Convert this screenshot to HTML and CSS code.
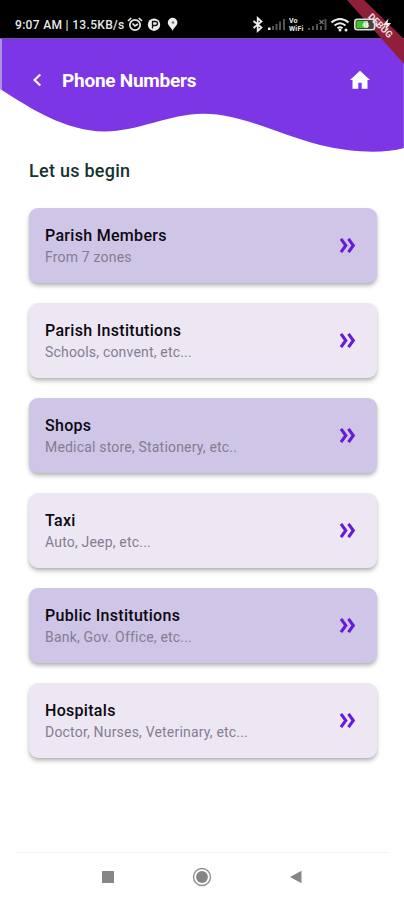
FILE: index.html
```html
<!DOCTYPE html>
<html lang="en">
<head>
<meta charset="utf-8">
<title>Phone Numbers</title>
<link rel="stylesheet" href="styles.css">
</head>
<body>
<div class="phone">
  <div class="status">
    <span class="time">9:07 AM | 13.5KB/s</span>
    <svg class="left-icons" width="54" height="18" viewBox="126 16 54 18">
      <g fill="none" stroke="#e8e8e8" stroke-width="1.7"><circle cx="135" cy="25" r="5.2"/><path d="M128 21l3.2-3M142 21l-3.2-3M132.500 23.500l2.500 2.500 3-2"/></g>
      <circle cx="154" cy="24.700" r="6.200" fill="#eee"/>
      <path d="M152.500 28.500v-7h3a2 2 0 0 1 0 4h-3" fill="none" stroke="#111" stroke-width="1.300"/>
      <path d="M172.600 31c-1-3-4.800-5-4.800-8.400a4.800 4.800 0 0 1 9.600 0c0 3.400-3.800 5.400-4.800 8.400z" fill="#eee"/>
      <circle cx="173" cy="22.500" r="1.300" fill="#777"/>
    </svg>
    <span class="spacer"></span>
    <svg class="right-icons" width="39" height="18" viewBox="250 16 39 18">
      <path d="M253.500 21l8 6.500-3.800 3.500v-13l3.800 3.500-8 6.500" fill="none" stroke="#eee" stroke-width="1.800"/>
      <path d="M268 30v-2.500h2.500V30z" fill="#eee"/>
      <g fill="#555"><path d="M272 30v-4h2v4zM275.500 30v-6h2v6zM279 30v-8.500h2V30zM283 30V19h2v11z"/></g>
    </svg>
    <span class="vowifi"><b>Vo</b><b>WiFi</b></span>
    <svg class="right-icons" width="92" height="18" viewBox="307 16 92 18">
      <g fill="#555"><path d="M308 30v-2h2v2zM312 30v-4h2v4zM316 30v-6h2v6zM320 30v-4h2v4zM324.500 30V19h2v11z"/></g>
      <path d="M319.500 20l4 4m0-4l-4 4" stroke="#777" stroke-width="1.200"/>
      <g fill="none" stroke="#eee" stroke-width="2"><path d="M331.500 22.500q8.500-7 17 0M334.500 25.500q5.500-4.500 11 0M337.500 28.300q2.500-2 5 0"/></g>
      <circle cx="340" cy="30" r="1.500" fill="#eee"/><circle cx="346" cy="30" r="1.500" fill="#eee"/>
    </svg>
  </div>
  <header class="header">
    <svg class="wave" width="404" height="116" viewBox="0 38 404 116">
      <path d="M0 38H404V148C382 154 352 152.500 320 145C275 133.500 241 113.500 203 113.800C169 114 137 131.800 104 131.500C65 131 30 108 0 89Z" fill="#7c36e6"/>
      <path d="M0 38H2V90.300L0 89z" fill="#ac94e3"/>
      <path d="M0 38.500H404" stroke="#74539f"/>
      <path d="M403.500 39V148" stroke="#9153eb"/>
    </svg>
    <div class="bar">
      <svg width="10" height="14" viewBox="0 0 10 14"><path d="M8.300 1.500L2.500 7l5.800 5.500" fill="none" stroke="#fff" stroke-width="2.100"/></svg>
      <h1>Phone Numbers</h1>
      <svg class="home" width="22" height="20" viewBox="0 0 22 20"><path d="M11 .8L21 10h-2.500v8.800h-5.800v-6H9.300v6H3.500V10H1z" fill="#fff"/></svg>
    </div>
  </header>
  <main class="content">
    <h2>Let us begin</h2>
    <div class="cards">
      <div class="card deep"><div><h3>Parish Members</h3><p>From 7 zones</p></div><svg class="more" width="18" height="17" viewBox="0 0 18 17"><path d="M2 1.800L6.800 8.500 2 15.200M9.500 1.800l4.800 6.700-4.800 6.700"/></svg></div>
      <div class="card"><div><h3>Parish Institutions</h3><p>Schools, convent, etc...</p></div><svg class="more" width="18" height="17" viewBox="0 0 18 17"><path d="M2 1.800L6.800 8.500 2 15.200M9.500 1.800l4.800 6.700-4.800 6.700"/></svg></div>
      <div class="card deep"><div><h3>Shops</h3><p>Medical store, Stationery, etc..</p></div><svg class="more" width="18" height="17" viewBox="0 0 18 17"><path d="M2 1.800L6.800 8.500 2 15.200M9.500 1.800l4.800 6.700-4.800 6.700"/></svg></div>
      <div class="card"><div><h3>Taxi</h3><p>Auto, Jeep, etc...</p></div><svg class="more" width="18" height="17" viewBox="0 0 18 17"><path d="M2 1.800L6.800 8.500 2 15.200M9.500 1.800l4.800 6.700-4.800 6.700"/></svg></div>
      <div class="card deep"><div><h3>Public Institutions</h3><p>Bank, Gov. Office, etc...</p></div><svg class="more" width="18" height="17" viewBox="0 0 18 17"><path d="M2 1.800L6.800 8.500 2 15.200M9.500 1.800l4.800 6.700-4.800 6.700"/></svg></div>
      <div class="card"><div><h3>Hospitals</h3><p>Doctor, Nurses, Veterinary, etc...</p></div><svg class="more" width="18" height="17" viewBox="0 0 18 17"><path d="M2 1.800L6.800 8.500 2 15.200M9.500 1.800l4.800 6.700-4.800 6.700"/></svg></div>
    </div>
  </main>
  <nav class="nav">
    <svg width="14" height="14" viewBox="0 0 14 14"><rect x="1" y="1" width="12" height="12" rx=".5" fill="#868686"/></svg>
    <svg width="20" height="20" viewBox="0 0 20 20"><circle cx="10" cy="10" r="8.500" fill="none" stroke="#909090" stroke-width="1.400"/><circle cx="10" cy="10" r="5.900" fill="#858585"/></svg>
    <svg width="14" height="14" viewBox="0 0 14 14"><path d="M1 7L12.500.8v12.400z" fill="#868686"/></svg>
  </nav>
  <svg class="debug" width="64" height="64" viewBox="340 0 64 64">
    <path d="M347 0H364L404 39V64Z" fill="#90203a"/>
    <rect x="354.800" y="19.300" width="19.800" height="10.400" rx="2.500" fill="#444" stroke="#ddd" stroke-width="1.600"/>
    <path d="M356.500 21h7v7h-7z" fill="#3fc51e"/>
    <path d="M363.500 21h4.500v7h-4.500z" fill="#a6df98"/>
    <path d="M375.500 22.500h1.800v4h-1.800z" fill="#ddd"/>
    <path d="M388.500 18.500l-5.500 6.500h3.500l-1.500 5.500 6-7.500h-3.500z" fill="#eee"/>
    <text class="charge" x="362" y="27">48</text>
    <text class="ribbon" transform="translate(380.500 25.500) rotate(45)" text-anchor="middle" y="3.300">DEBUG</text>
  </svg>
</div>
</body>
</html>
```
FILE: styles.css
```css
* { box-sizing: border-box; }
body { margin: 0; background: #fff; font-family: Roboto, sans-serif; }
h1, h2, h3, p { margin: 0; white-space: nowrap; }
svg { display: block; flex: none; }
.phone { position: relative; width: 404px; height: 900px; overflow: hidden; display: flex; flex-direction: column; }
.status { height: 38px; background: #000; color: #e9e9e9; display: flex; align-items: center; padding: 12px 5px 0 15px; }
.time { width: 111px; font-size: 12px; letter-spacing: .32px; font-weight: 500; line-height: 14px; white-space: nowrap; }
.spacer { flex: 1; }
.vowifi { width: 18px; display: flex; flex-direction: column; font-size: 7px; line-height: 8.5px; letter-spacing: .2px; }
.charge { font: 700 6px Roboto, sans-serif; fill: #fff; }
.header { height: 116px; display: grid; }
.wave, .bar { grid-area: 1 / 1; }
.bar { height: 84px; display: flex; align-items: center; padding: 0 33px 0 32px; }
.bar h1 { margin-left: 20px; flex: 1; color: #fff; font-size: 19px; letter-spacing: -.24px; font-weight: 700; line-height: 24px; padding-top: 1px; }
.content { flex: 1; padding: 5px 27px 0 29px; }
h2 { font-size: 18px; letter-spacing: .27px; line-height: 24px; font-weight: 500; color: #17332f; }
.cards { display: grid; gap: 20px; margin-top: 25px; }
.card { height: 75px; border-radius: 9px; background: #ede7f4; display: flex; align-items: center; justify-content: space-between; padding: 0 20px 0 16px; box-shadow: 0 3px 4px rgba(0,0,0,.26), 0 1px 2px rgba(0,0,0,.06); }
.card.deep { background: #cfc5e7; }
.card > div { padding-top: 2px; }
.card h3 { font-size: 16px; letter-spacing: .3px; line-height: 22px; font-weight: 500; color: #0b0810; }
.card p { font-size: 14px; letter-spacing: .19px; line-height: 21px; color: #847d91; }
.more { fill: none; stroke: #671bd7; stroke-width: 3.1; }
.nav { height: 48px; border-top: 1px solid #f4f4f4; margin: 0 15px; display: flex; align-items: center; justify-content: space-between; padding: 0 86px; }
.debug { position: absolute; top: 0; right: 0; }
.ribbon { font: 700 9.5px Roboto, sans-serif; fill: #eee0e2; }
```
